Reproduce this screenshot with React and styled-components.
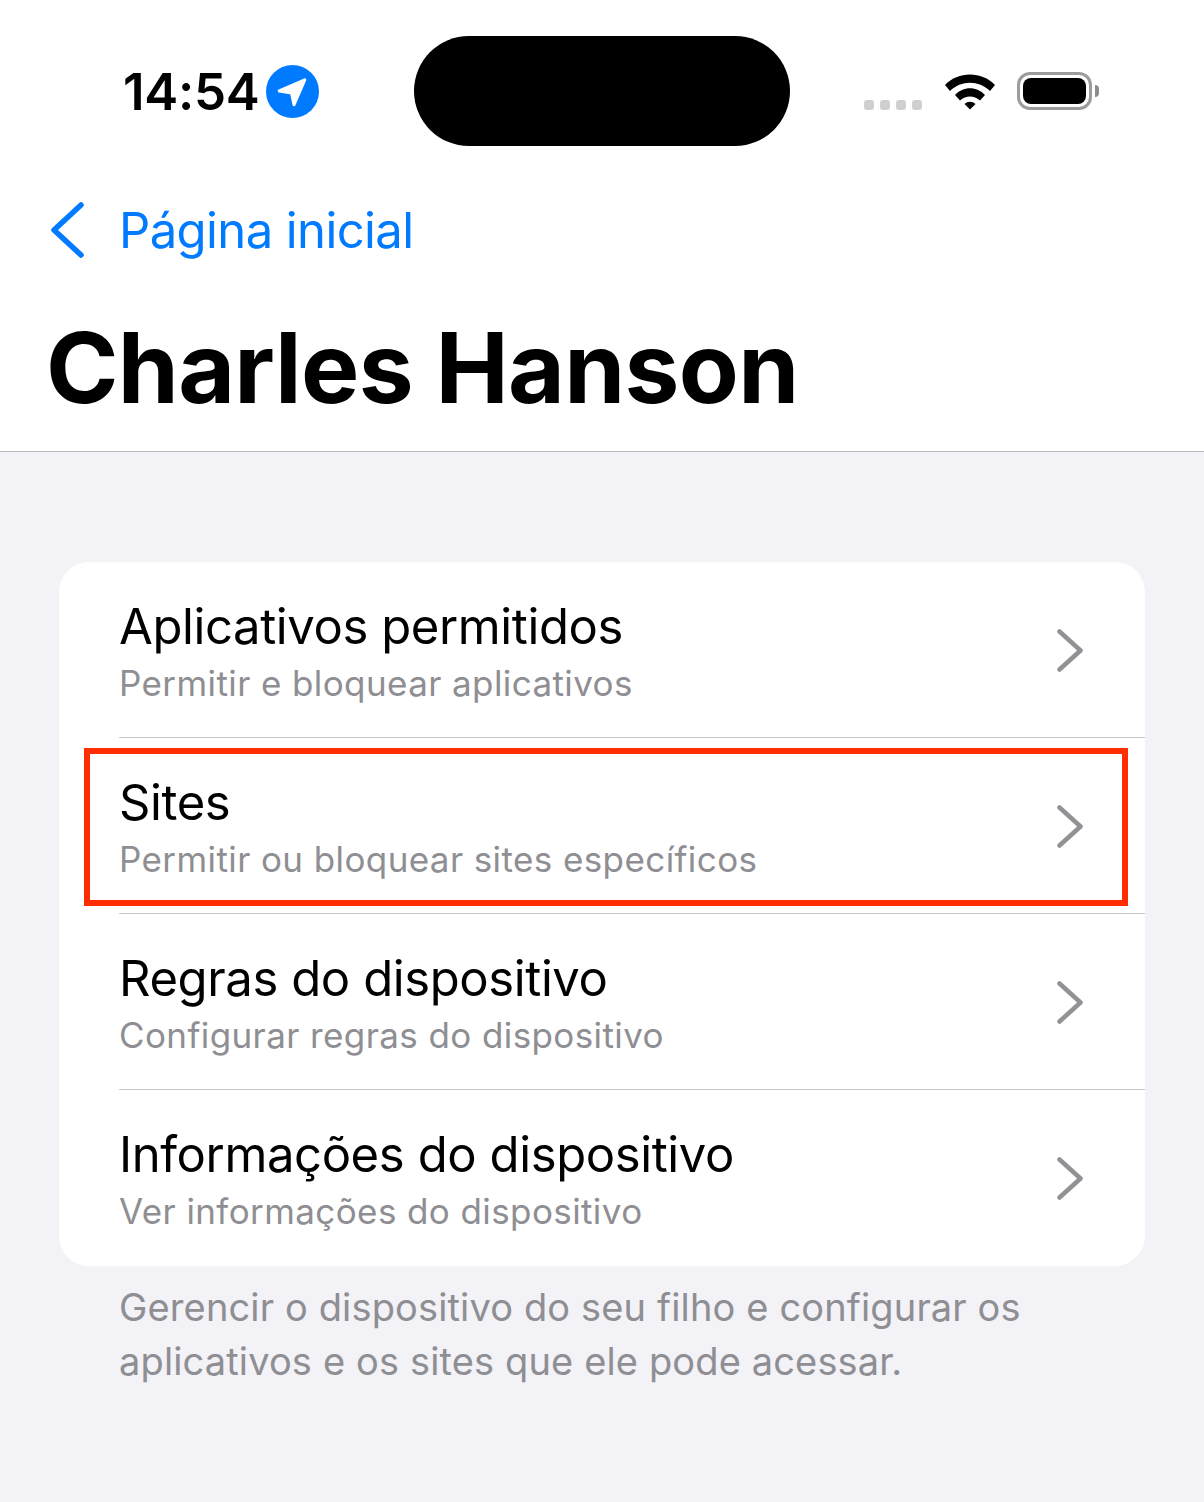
import styled, { createGlobalStyle } from 'styled-components';

const rows = [
  { title: 'Aplicativos permitidos', sub: 'Permitir e bloquear aplicativos' },
  { title: 'Sites', sub: 'Permitir ou bloquear sites específicos', marked: true },
  { title: 'Regras do dispositivo', sub: 'Configurar regras do dispositivo' },
  { title: 'Informações do dispositivo', sub: 'Ver informações do dispositivo' },
];

const App = () => (
  <>
    <GlobalStyle />
    <Page>
      <Header>
        <StatusBar>
          <TimeGroup>
            <Time>14:54</Time>
            <LocationBadge>
              <svg width="53" height="53" viewBox="0 0 52 52">
                <circle cx="26" cy="26" r="26" fill="#007aff" />
                <path d="M13 25.5 L38 14.5 L27.5 39 L25 27.5 Z" fill="#fff" stroke="#fff" strokeWidth="3" strokeLinejoin="round" />
              </svg>
            </LocationBadge>
          </TimeGroup>
          <Island />
          <StatusIcons>
            <Dots>
              <Dot />
              <Dot />
              <Dot />
              <Dot />
            </Dots>
            <svg width="52" height="38" viewBox="0 0 52 38">
              <path d="M1 13 C14 -1 38 -1 51 13 L46 19 C35 8 17 8 6 19 Z" fill="#000" />
              <path d="M11 23 C19 14 33 14 41 23 L36 28.5 C30 23 22 23 16 28.5 Z" fill="#000" />
              <path d="M20.500 32 C24 29 28 29 31.500 32 L26 37.500 Z" fill="#000" />
            </svg>
            <Battery>
              <BatteryFill />
              <BatteryCap />
            </Battery>
          </StatusIcons>
        </StatusBar>
        <BackLink>
          <svg width="34" height="56" viewBox="0 0 34 56">
            <path d="M31 3 L4 28 L31 53" fill="none" stroke="#007aff" strokeWidth="5.500" strokeLinecap="round" strokeLinejoin="round" />
          </svg>
          <BackLabel>Página inicial</BackLabel>
        </BackLink>
        <Title>Charles Hanson</Title>
      </Header>
      <Content>
        <Card>
          {rows.map((row) => (
            <Row key={row.title}>
              <RowText>
                <RowTitle>{row.title}</RowTitle>
                <RowSub>{row.sub}</RowSub>
              </RowText>
              <Chevron width="26" height="43" viewBox="0 0 26 43">
                <path d="M2.500 2.500 L23.500 21.500 L2.500 40.500" fill="none" stroke="#929296" strokeWidth="4.500" strokeLinecap="round" strokeLinejoin="round" />
              </Chevron>
              {row.marked && <Highlight />}
            </Row>
          ))}
        </Card>
        <Footer>
          Gerencir o dispositivo do seu filho e configurar os
          <br />
          aplicativos e os sites que ele pode acessar.
        </Footer>
      </Content>
    </Page>
  </>
);

const GlobalStyle = createGlobalStyle`
  html, body {
    margin: 0;
    padding: 0;
    background: #f2f2f7;
  }

  body {
    font-family: Inter, "Liberation Sans", sans-serif;
    -webkit-font-smoothing: antialiased;
  }
`;

const Page = styled.div`
  display: flex;
  flex-direction: column;
  width: 1204px;
  height: 1502px;
  overflow: hidden;
  background: #f2f2f7;
`;

const Header = styled.header`
  display: flex;
  flex-direction: column;
  height: 452px;
  box-sizing: border-box;
  background: #fff;
  border-bottom: 1px solid #b9b9bb;
`;

const StatusBar = styled.div`
  display: flex;
  align-items: flex-start;
  height: 146px;
  padding-top: 36px;
  box-sizing: border-box;
`;

const TimeGroup = styled.div`
  display: flex;
  align-items: center;
  width: 414px;
  height: 110px;
  padding-left: 123px;
  box-sizing: border-box;
`;

const Time = styled.span`
  font-size: 51px;
  font-weight: 600;
  letter-spacing: -0.3px;
  color: #000;
`;

const LocationBadge = styled.span`
  display: flex;
  margin-top: 1px;
  margin-left: 7px;
`;

const Island = styled.div`
  width: 376px;
  height: 110px;
  border-radius: 55px;
  background: #000;
`;

const StatusIcons = styled.div`
  display: flex;
  align-items: center;
  height: 110px;
  padding-left: 74px;
`;

const Dots = styled.div`
  display: flex;
  gap: 6px;
  margin-top: 28px;
  margin-right: 22px;
`;

const Dot = styled.span`
  width: 10px;
  height: 10px;
  border-radius: 3px;
  background: #cfcfcf;
`;

const Battery = styled.div`
  position: relative;
  display: flex;
  align-items: center;
  justify-content: center;
  width: 75px;
  height: 38px;
  margin-left: 21px;
  box-sizing: border-box;
  border: 3px solid #9c9c9c;
  border-radius: 13px;
`;

const BatteryFill = styled.span`
  width: 63px;
  height: 26px;
  border-radius: 8px;
  background: #000;
`;

const BatteryCap = styled.span`
  position: absolute;
  right: -10px;
  width: 4px;
  height: 12px;
  border-radius: 0 6px 6px 0;
  background: #8c8c8c;
`;

const BackLink = styled.div`
  display: flex;
  align-items: center;
  height: 56px;
  margin-top: 56px;
  padding-left: 50px;
`;

const BackLabel = styled.span`
  margin-left: 35px;
  font-size: 49px;
  letter-spacing: -0.6px;
  color: #007aff;
`;

const Title = styled.h1`
  margin: 54px 0 0 46px;
  font-size: 98px;
  line-height: 112px;
  font-weight: 700;
  letter-spacing: -0.68px;
  color: #000;
`;

const Content = styled.main`
  display: flex;
  flex-direction: column;
  padding: 110px 59px 0;
`;

const Card = styled.section`
  display: flex;
  flex-direction: column;
  width: 1086px;
  border-radius: 30px;
  background: #fff;
`;

const Row = styled.div`
  position: relative;
  display: flex;
  align-items: center;
  justify-content: space-between;
  height: 176px;
  margin-left: 60px;
  padding-right: 62px;
  box-sizing: border-box;
  border-bottom: 1px solid #c8c8ca;

  &:last-child {
    border-bottom-color: transparent;
  }
`;

const RowText = styled.div`
  display: flex;
  flex-direction: column;
  gap: 2px;
  margin-top: 5px;
`;

const RowTitle = styled.span`
  font-size: 49px;
  line-height: 60px;
  letter-spacing: -0.4px;
  color: #000;
`;

const RowSub = styled.span`
  font-size: 35px;
  line-height: 48px;
  letter-spacing: 0.4px;
  color: #8e8e93;
`;

const Chevron = styled.svg`
  margin-top: 2px;
`;

const Highlight = styled.div`
  position: absolute;
  top: 10px;
  left: -35px;
  right: 17px;
  height: 158px;
  box-sizing: border-box;
  border: 6px solid #ff2d00;
  pointer-events: none;
`;

const Footer = styled.p`
  margin: 14px 0 0 60px;
  font-size: 38px;
  line-height: 54px;
  letter-spacing: 0.14px;
  color: #8e8e93;
`;

export default App;
